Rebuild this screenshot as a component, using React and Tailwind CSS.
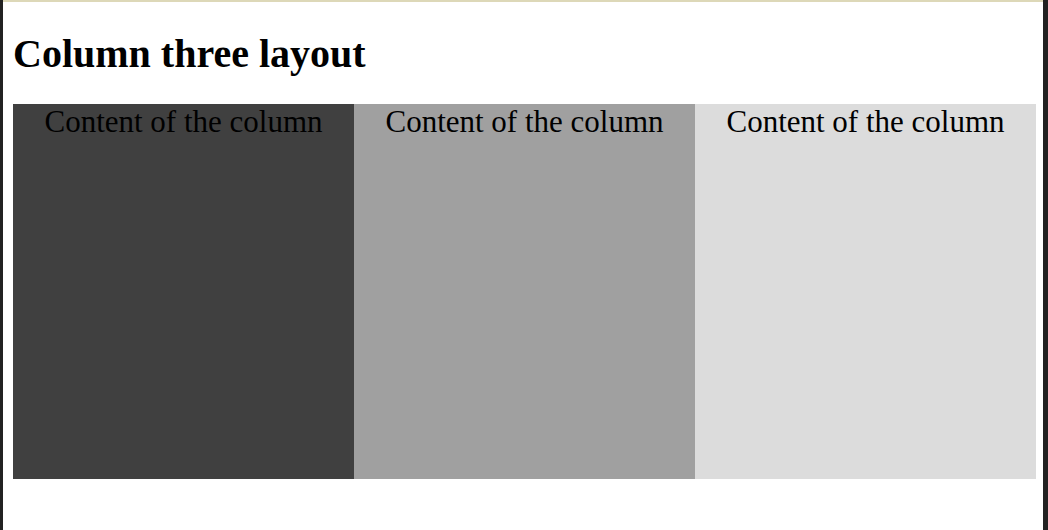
export default function App() {
  const cols = ['bg-[#404040]', 'bg-[#a0a0a0]', 'bg-[#dcdcdc]']
  return (
    <div className="flex h-[530px] w-[1048px] bg-[#222222]" style={{ fontFamily: '"Liberation Serif", "Times New Roman", serif' }}>
      <div className="ml-[3px] mr-[5px] flex-1 border-t-2 border-[#ddd8b8] bg-white pl-[10px]">
        <h1 className="m-0 pt-[29px] text-[40px] font-bold leading-[46px] text-black">Column three layout</h1>
        <div className="mt-[27px] flex">
          {cols.map((c) => (
            <div key={c} className={`${c} h-[375px] w-[341px] text-center text-[31px] leading-[35px] text-black`}>
              Content of the column
            </div>
          ))}
        </div>
      </div>
    </div>
  )
}
